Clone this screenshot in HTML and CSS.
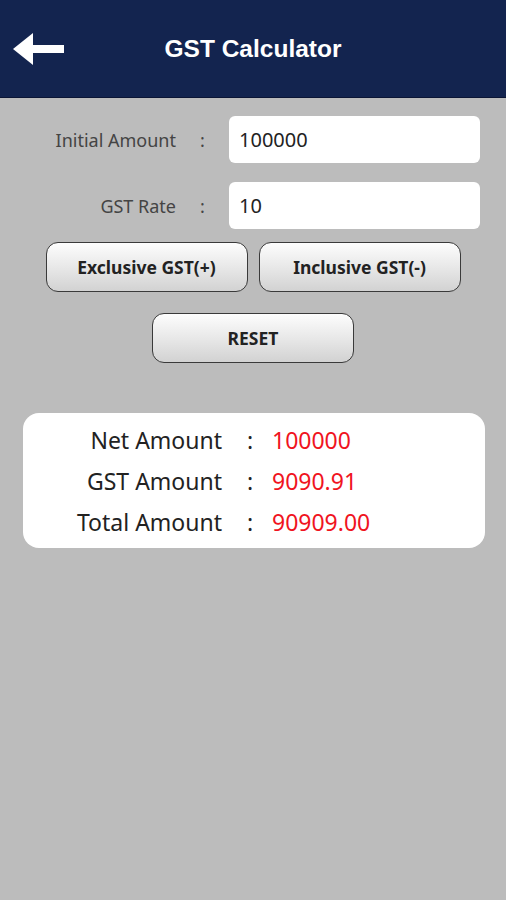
FILE: index.html
```html
<!DOCTYPE html>
<html lang="en">
<head>
  <meta charset="UTF-8" />
  <meta name="viewport" content="width=device-width, initial-scale=1.0"/>
  <title>GST Calculator</title>
  <link rel="stylesheet" href="styles.css">
</head>
<body>

  <!-- Top bar -->
  <div class="topbar">
    <svg class="back" width="52" height="34" viewBox="0 0 52 34">
      <path d="M0 16 L20 0 L20 12 L51 12 L51 20 L20 20 L20 32 Z" fill="#fff"/>
    </svg>
    <h1>GST Calculator</h1>
  </div>

  <div class="form">
    <div class="row">
      <span class="label">Initial Amount</span>
      <span class="colon">:</span>
      <input class="field" type="text" value="100000">
    </div>
    <div class="row">
      <span class="label">GST Rate</span>
      <span class="colon">:</span>
      <input class="field" type="text" value="10">
    </div>

    <div class="btn-row">
      <button class="btn">Exclusive GST(+)</button>
      <button class="btn">Inclusive GST(-)</button>
    </div>
    <div class="btn-row">
      <button class="btn">RESET</button>
    </div>
  </div>

  <div class="result">
    <div class="res-row">
      <span class="res-label">Net Amount</span>
      <span class="res-colon">:</span>
      <span class="res-value">100000</span>
    </div>
    <div class="res-row">
      <span class="res-label">GST Amount</span>
      <span class="res-colon">:</span>
      <span class="res-value">9090.91</span>
    </div>
    <div class="res-row">
      <span class="res-label">Total Amount</span>
      <span class="res-colon">:</span>
      <span class="res-value">90909.00</span>
    </div>
  </div>

</body>
</html>
```

FILE: styles.css
```css
body {
  margin: 0;
  font-family: "Noto Sans", "Liberation Sans", Arial, sans-serif;
  background-color: #bcbcbc;
  min-height: 900px;
}

.topbar {
  position: relative;
  height: 97px;
  background-color: #13244f;
  border-bottom: 1px solid #0b1535;
  display: flex;
  align-items: center;
  justify-content: center;
}

.topbar .back {
  position: absolute;
  left: 13px;
  top: 33px;
}

.topbar h1 {
  margin: 0;
  color: #fff;
  font-family: "Liberation Sans", Arial, sans-serif;
  font-size: 24.5px;
  font-weight: bold;
}

.form {
  padding-top: 18px;
}

.row {
  display: flex;
  align-items: center;
  height: 47px;
  margin-bottom: 19px;
}

.label {
  width: 176px;
  text-align: right;
  font-size: 18px;
  color: #444;
}

.colon {
  width: 53px;
  text-align: center;
  font-size: 18px;
  color: #444;
}

.field {
  width: 251px;
  height: 47px;
  box-sizing: border-box;
  border: none;
  border-radius: 6px;
  background: #fff;
  padding: 0 10px;
  font-family: inherit;
  font-size: 20px;
  color: #222;
}

.btn-row {
  display: flex;
  justify-content: center;
  gap: 11px;
  margin-top: -6px;
  margin-bottom: 27px;
}

.btn {
  width: 202px;
  height: 50px;
  border: 1.5px solid #3a3a3a;
  border-radius: 12px;
  background: linear-gradient(#fdfdfd, #e6e6e6 55%, #d2d2d2);
  font-family: inherit;
  font-size: 17.5px;
  font-weight: bold;
  color: #222;
}

.result {
  margin: 50px 21px 0 23px;
  padding: 6px 0;
  background: #fff;
  border-radius: 16px;
}

.res-row {
  display: flex;
  align-items: center;
  height: 41px;
  font-size: 23px;
}

.res-label {
  width: 199px;
  text-align: right;
  color: #222;
}

.res-colon {
  width: 50px;
  padding-left: 6px;
  box-sizing: border-box;
  text-align: center;
  color: #222;
}

.res-value {
  color: #f0141e;
}
```
